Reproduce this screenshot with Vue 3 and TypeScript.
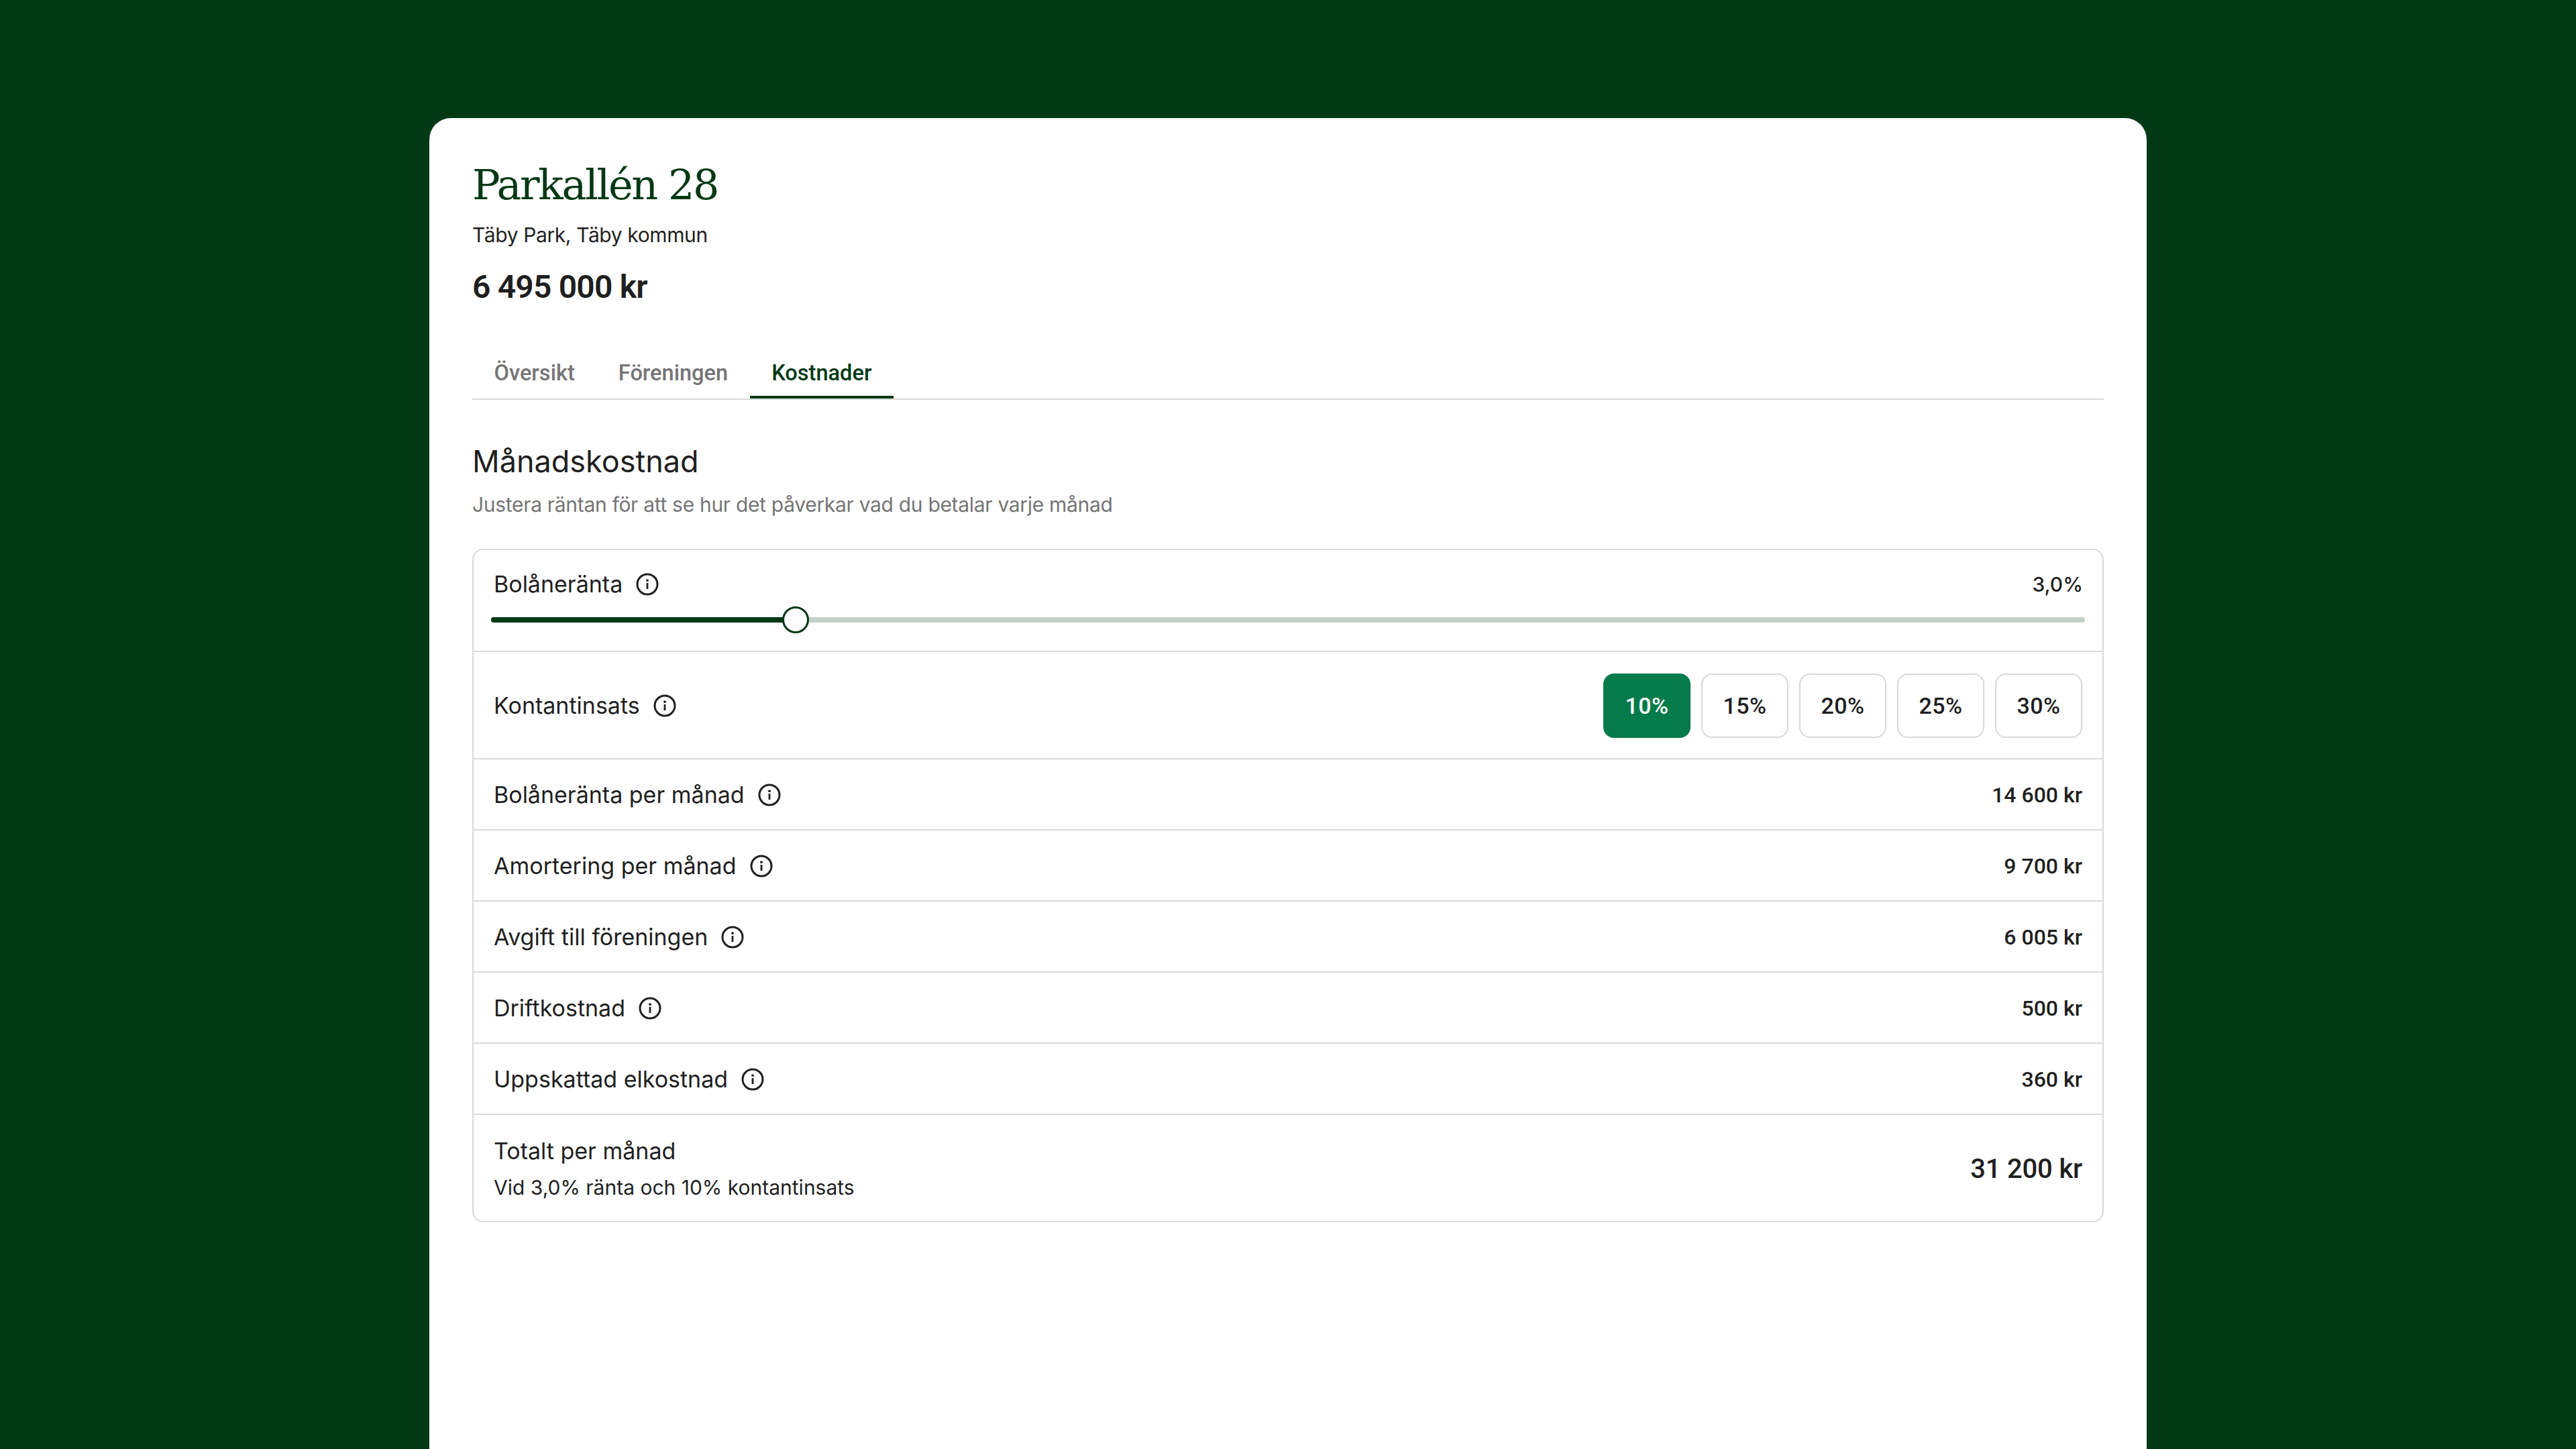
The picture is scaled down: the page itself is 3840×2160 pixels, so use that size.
<script setup lang="ts">
const tabs = ['Översikt', 'Föreningen', 'Kostnader']
const options = ['10%', '15%', '20%', '25%', '30%']
const rows = [
  { label: 'Bolåneränta per månad', value: '14 600 kr' },
  { label: 'Amortering per månad', value: '9 700 kr' },
  { label: 'Avgift till föreningen', value: '6 005 kr' },
  { label: 'Driftkostnad', value: '500 kr' },
  { label: 'Uppskattad elkostnad', value: '360 kr' },
]
</script>

<template>
  <main class="page">
    <section class="card">
      <h1 class="title">Parkallén 28</h1>
      <p class="area">Täby Park, Täby kommun</p>
      <p class="price">6 495 000 kr</p>

      <nav class="tabs">
        <span v-for="(t, i) in tabs" :key="t" class="tab" :class="{ active: i === 2 }">{{ t }}</span>
      </nav>

      <h2 class="heading">Månadskostnad</h2>
      <p class="desc">Justera räntan för att se hur det påverkar vad du betalar varje månad</p>

      <div class="panel">
        <div class="slider-row">
          <div class="line">
            <span class="label">Bolåneränta
              <svg class="info" viewBox="0 0 36 36"><circle cx="18" cy="18" r="15" fill="none" stroke="currentColor" stroke-width="3" /><circle cx="18" cy="12.2" r="1.9" fill="currentColor" /><rect x="16.6" y="16" width="2.8" height="9" fill="currentColor" /></svg>
            </span>
            <span class="rate">3,0%</span>
          </div>
          <div class="track"><div class="fill"></div><div class="thumb"></div></div>
        </div>

        <div class="row options-row">
          <span class="label">Kontantinsats
            <svg class="info" viewBox="0 0 36 36"><circle cx="18" cy="18" r="15" fill="none" stroke="currentColor" stroke-width="3" /><circle cx="18" cy="12.2" r="1.9" fill="currentColor" /><rect x="16.6" y="16" width="2.8" height="9" fill="currentColor" /></svg>
          </span>
          <div class="options">
            <button v-for="(o, i) in options" :key="o" class="opt" :class="{ on: i === 0 }">{{ o }}</button>
          </div>
        </div>

        <div v-for="r in rows" :key="r.label" class="row">
          <span class="label">{{ r.label }}
            <svg class="info" viewBox="0 0 36 36"><circle cx="18" cy="18" r="15" fill="none" stroke="currentColor" stroke-width="3" /><circle cx="18" cy="12.2" r="1.9" fill="currentColor" /><rect x="16.6" y="16" width="2.8" height="9" fill="currentColor" /></svg>
          </span>
          <span class="value">{{ r.value }}</span>
        </div>

        <div class="row total">
          <div>
            <div class="total-label">Totalt per månad</div>
            <div class="total-sub">Vid 3,0% ränta och 10% kontantinsats</div>
          </div>
          <span class="total-value">31 200 kr</span>
        </div>
      </div>
    </section>
  </main>
</template>

<style>
html, body { margin: 0; background: #023915; }
</style>

<style scoped>
.page {
  box-sizing: border-box;
  width: 3840px;
  height: 2160px;
  padding-top: 176px;
  overflow: hidden;
  background: #023915;
  display: flex;
  justify-content: center;
  font-family: Inter, sans-serif;
  color: #1f1f1f;
}
.card {
  box-sizing: border-box;
  width: 2560px;
  height: 1984px;
  background: #fff;
  border-radius: 32px 32px 0 0;
  padding: 60px 64px 0;
}
.title {
  margin: 0;
  font-family: "DejaVu Serif", serif;
  font-weight: 400;
  font-size: 62px;
  line-height: 80px;
  letter-spacing: -2.4px;
  color: #023915;
}
.area { margin: 12px 0 0; font-size: 30px; line-height: 44px; letter-spacing: -0.39px; }
.price { margin: 26px 0 0; font-family: Roboto, sans-serif; font-size: 48px; line-height: 60px; font-weight: 600; letter-spacing: -0.8px; }
.tabs {
  display: flex;
  margin-top: 70px;
  border-bottom: 2px solid #d9d9d9;
  height: 66px;
}
.tab {
  padding: 0 32.5px;
  font-family: Roboto, sans-serif;
  font-size: 32.6px;
  font-weight: 500;
  line-height: 56px;
  color: #757575;
  height: 66px;
  box-sizing: border-box;
}
.tab.active { color: #023915; border-bottom: 4px solid #023915; }
.heading { margin: 62px 0 0; font-size: 45px; line-height: 60px; font-weight: 400; }
.desc { margin: 12px 0 0; font-size: 30px; line-height: 44px; color: #757575; letter-spacing: -0.31px; }
.panel {
  margin-top: 44px;
  border: 2px solid #d9d9d9;
  border-radius: 16px;
}
.slider-row { box-sizing: border-box; height: 150px; padding: 26px 26px 0 26px; }
.line { display: flex; justify-content: space-between; align-items: center; padding: 0 3px 0 4px; height: 50px; }
.track { position: relative; margin-top: 24px; height: 8px; background: #c3d0c8; border-radius: 4px; }
.fill { width: 19.1%; height: 100%; background: #023915; border-radius: 4px; }
.thumb {
  position: absolute;
  left: 19.1%;
  top: 50%;
  box-sizing: border-box;
  width: 40px;
  height: 40px;
  margin: -20px 0 0 -20px;
  background: #fff;
  border: 3px solid #023915;
  border-radius: 50%;
}
.row {
  box-sizing: border-box;
  display: flex;
  justify-content: space-between;
  align-items: center;
  height: 106px;
  padding: 2px 30px 0;
  border-top: 2px solid #d9d9d9;
}
.options-row { height: 160px; }
.label { display: inline-flex; align-items: center; gap: 19px; font-size: 34px; font-weight: 420; line-height: 48px; }
.info { width: 36px; height: 36px; }
.value { font-family: Roboto, sans-serif; font-size: 32px; font-weight: 500; }
.rate { font-size: 30px; font-weight: 500; }
.options { display: flex; gap: 16px; }
.opt {
  box-sizing: border-box;
  width: 130px;
  height: 96px;
  padding: 0;
  background: #fff;
  border: 2px solid #d9d9d9;
  border-radius: 16px;
  font-family: Roboto, sans-serif;
  font-size: 34px;
  letter-spacing: 0.5px;
  font-weight: 500;
  color: #1f1f1f;
}
.opt.on { background: #057a4b; border-color: #057a4b; color: #fff; }
.total { height: 160px; }
.total-label { font-size: 34px; line-height: 48px; font-weight: 420; }
.total-sub { margin-top: 8px; font-size: 30px; line-height: 44px; }
.total-value { font-family: Roboto, sans-serif; font-size: 40px; font-weight: 500; letter-spacing: -0.2px; }
</style>
